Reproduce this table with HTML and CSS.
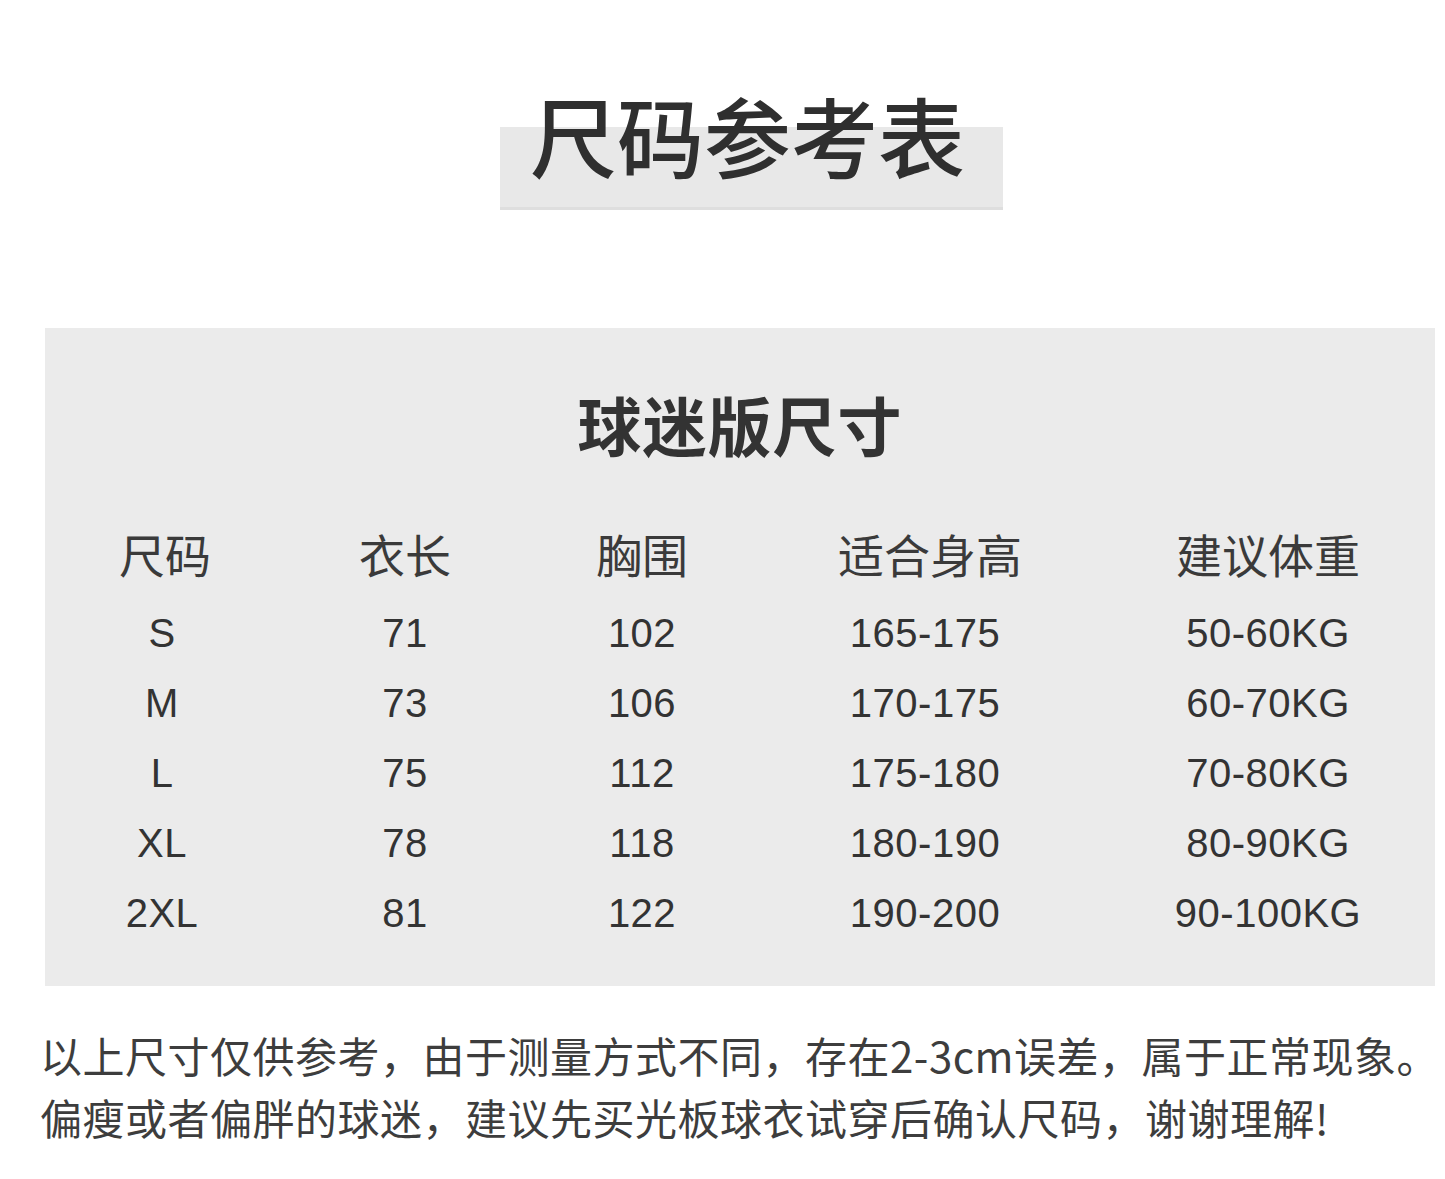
FILE: index.html
```html
<!DOCTYPE html>
<html lang="zh-CN">
<head>
<meta charset="utf-8">
<title>尺码参考表</title>
<link rel="stylesheet" href="styles.css">
</head>
<body>
<div class="page">
  <div class="title-bar">
    <h1 class="title">尺码参考表</h1>
  </div>

  <section class="panel">
    <h2 class="subtitle">球迷版尺寸</h2>
    <div class="grid head">
      <div>尺码</div><div>衣长</div><div>胸围</div><div>适合身高</div><div>建议体重</div>
    </div>
    <div class="grid rows">
      <div>S</div><div>71</div><div>102</div><div>165-175</div><div>50-60KG</div>
      <div>M</div><div>73</div><div>106</div><div>170-175</div><div>60-70KG</div>
      <div>L</div><div>75</div><div>112</div><div>175-180</div><div>70-80KG</div>
      <div>XL</div><div>78</div><div>118</div><div>180-190</div><div>80-90KG</div>
      <div>2XL</div><div>81</div><div>122</div><div>190-200</div><div>90-100KG</div>
    </div>
  </section>

  <div class="note">
    <p>以上尺寸仅供参考，由于测量方式不同，存在2-3cm误差，属于正常现象。</p>
    <p>偏瘦或者偏胖的球迷，建议先买光板球衣试穿后确认尺码，谢谢理解!</p>
  </div>
</div>
</body>
</html>
```

FILE: styles.css
```css
html, body {
  margin: 0;
  padding: 0;
  background: #ffffff;
}
body {
  width: 1445px;
  height: 1179px;
  overflow: hidden;
  font-family: "Noto Sans CJK SC", "Liberation Sans", sans-serif;
  color: #333333;
}
.page {
  padding-top: 127px;
}
.title-bar {
  margin-left: 500px;
  width: 503px;
  height: 80px;
  background: #e8e8e8;
  box-shadow: 0 3px 0 #dedede;
}
.title {
  margin: 0;
  position: relative;
  top: -37px;
  padding-left: 30px;
  font-size: 87px;
  line-height: 88px;
  font-weight: 500;
  color: #2f2f2f;
  white-space: nowrap;
}
.panel {
  margin-top: 121px;
  margin-left: 45px;
  width: 1390px;
  height: 658px;
  box-sizing: border-box;
  padding-top: 55px;
  background: #ebebeb;
}
.subtitle {
  margin: 0;
  text-align: center;
  font-size: 64px;
  line-height: 80px;
  font-weight: 700;
  color: #333333;
  letter-spacing: 1px;
}
.grid {
  display: grid;
  grid-template-columns: 240px 240px 234px 332px 354px;
  text-align: center;
}
.head {
  margin-top: 60px;
  font-size: 46px;
  line-height: 60px;
  color: #3a3a3a;
}
.head > div:nth-child(4) {
  padding-left: 10px;
}
.rows {
  margin-top: 15px;
  font-family: "Liberation Sans", "Noto Sans CJK SC", sans-serif;
  font-size: 40px;
  line-height: 70px;
  letter-spacing: 0.5px;
  color: #333333;
}
.rows > div:nth-child(5n+1) {
  padding-right: 6px;
}
.note {
  margin-top: 38px;
  padding-left: 40px;
  font-size: 42px;
  line-height: 62px;
  letter-spacing: 0.5px;
  color: #3d3d3d;
  white-space: nowrap;
}
.note p {
  margin: 0;
}
```
